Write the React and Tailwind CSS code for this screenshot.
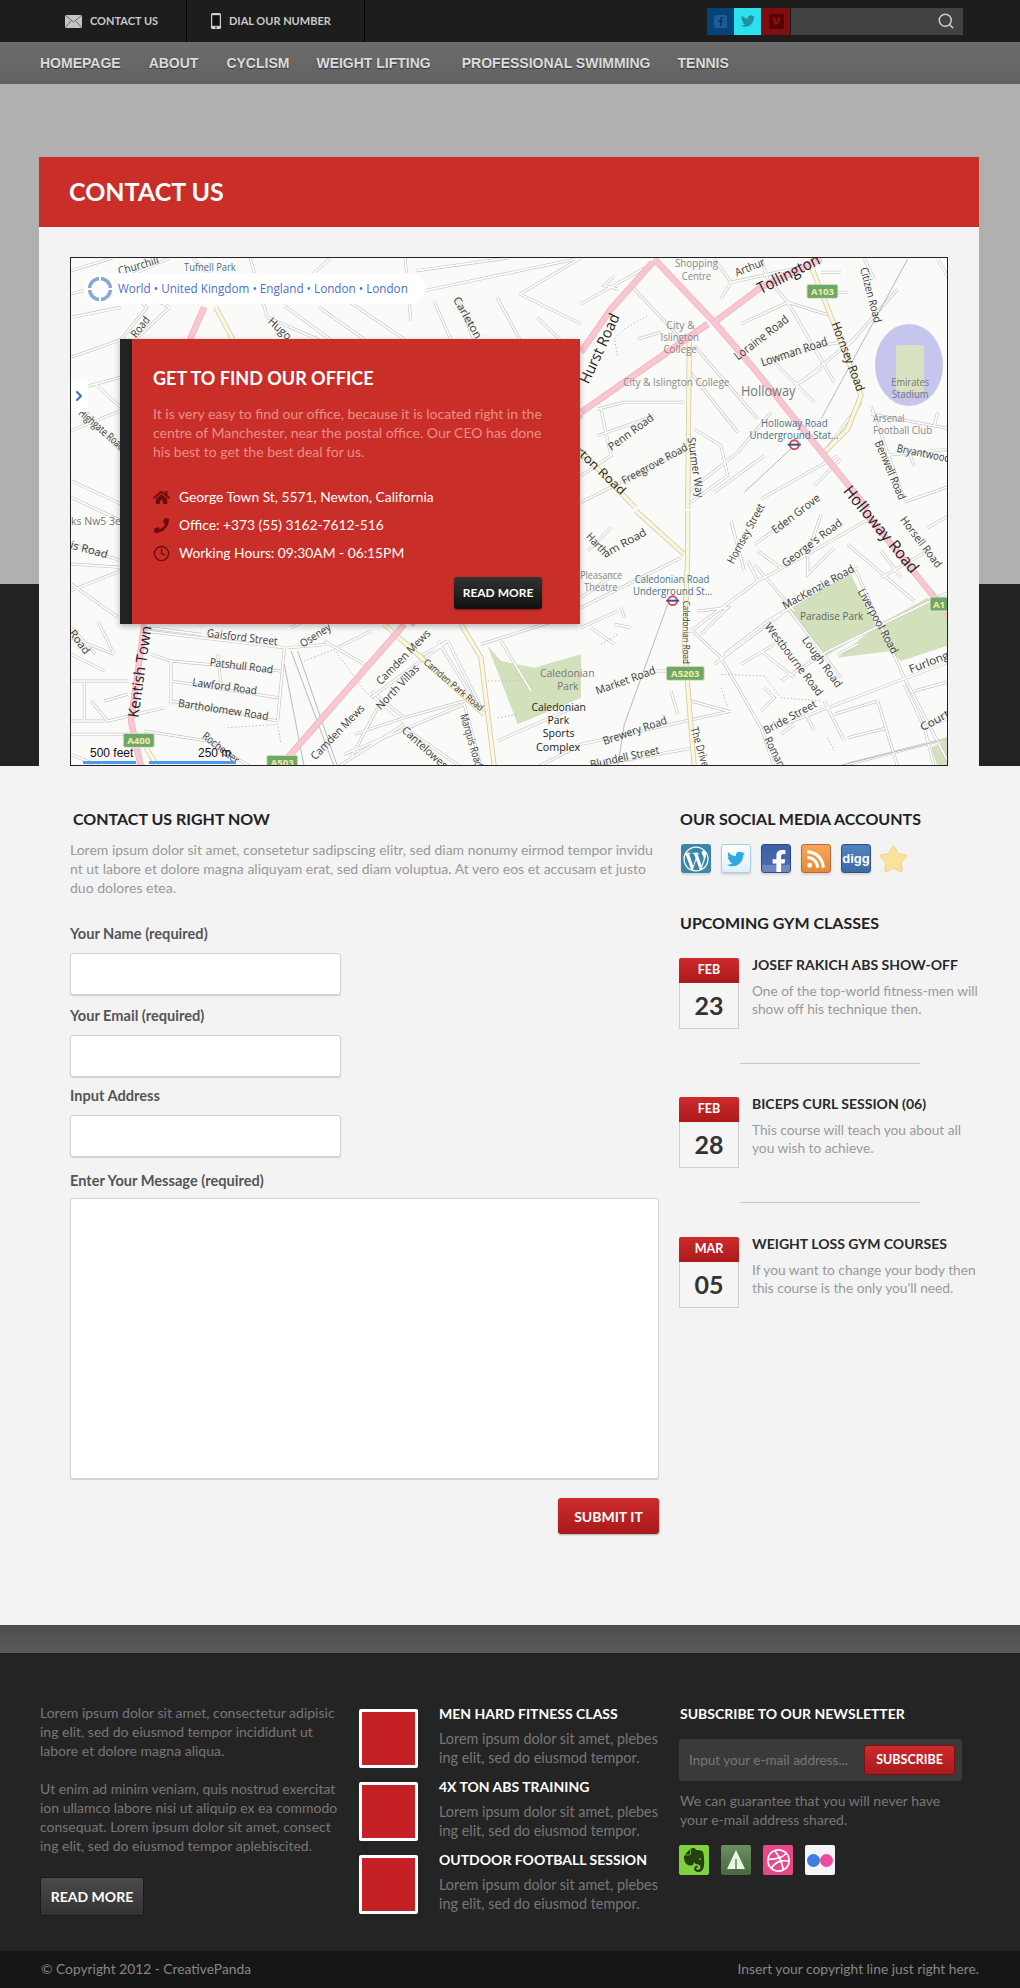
import { FaWordpressSimple, FaTwitter, FaFacebookF, FaRss, FaVimeoV, FaStar, FaHome, FaPhoneAlt } from 'react-icons/fa';
import { SiEvernote, SiDribbble } from 'react-icons/si';
import { FiClock, FiSearch, FiChevronRight } from 'react-icons/fi';

// the map data was read off four different blow-ups of the map, each has its own scale
const fromWhole = (x, y) => [(x - 18) / 1.742, (y - 22) / 3];
const fromTopRight = (x, y) => [510 + x / 3, 1 + y / 3];
const fromBottomRight = (x, y) => [510 + x / 3, 253 + y / 3];
const fromBottomLeft = (x, y) => [x / 3, 363 + y / 3];

const pts = (s, conv = fromWhole) =>
  s.split(' ').map((p) => {
    const [x, y] = p.split(',').map(Number);
    const [mx, my] = conv(x, y);
    return `${mx.toFixed(1)},${my.toFixed(1)}`;
  }).join(' ');

const list = (conv, items) => items.map((s) => pts(s, conv));

const minorStreets = [
  ...list(fromWhole, [
    '18,130 100,90 190,22', '18,60 90,22', '35,480 105,600', '18,690 105,760', '18,740 105,810', '18,880 105,930',
    '18,940 105,950', '18,1020 105,960', '18,1130 60,1210', '18,1000 100,1100', '18,540 105,480', '18,200 105,170', '18,320 105,267',
    '18,420 105,380', '60,400 105,470', '100,90 150,170 105,267', '190,170 130,267', '190,170 100,90', '360,200 450,267', '390,165 470,267',
    '450,170 530,267', '500,150 600,267', '600,22 610,210', '690,140 720,267', '760,140 800,267', '800,130 906,220',
    '620,60 780,22', '906,160 1030,40', '800,130 906,22', '550,150 906,22', '300,140 620,100', '330,22 360,200', '230,22 300,140',
    '650,150 680,267', '830,200 870,267', '420,100 470,22',
  ]),
  ...list(fromTopRight, [
    '160,90 300,240', '340,260 530,480', '320,330 470,520', '470,580 570,460', '400,700 550,590', '330,730 440,650 420,560 340,510',
    '50,450 130,430 310,430', '60,450 90,590 0,650', '50,530 220,470', '0,730 320,570', '480,195 620,130 750,170', '620,130 560,60 540,0',
    '400,0 450,70 420,120', '450,70 680,20', '620,130 760,370', '540,310 720,260 780,250', '580,310 700,430', '660,370 830,230', '720,330 640,380',
    '730,580 840,430', '870,440 970,720', '870,465 1110,510', '1070,460 1060,500', '900,590 1110,570', '980,570 1000,620', '970,730 1110,680',
    '700,680 780,600', '470,580 320,700', '540,720 770,590', '850,0 880,60', '1070,0 1110,70', '800,260 950,90', '100,50 70,80 110,90',
    '170,240 240,220', '730,100 800,100', '720,40 780,40',
  ]),
  ...list(fromBottomRight, [
    '20,120 90,50', '0,260 100,190', '0,290 300,140', '350,300 440,290 360,370', '330,360 530,210 680,130 870,20', '530,210 500,150',
    '430,430 560,330 830,170', '680,130 680,190 760,110', '620,290 780,500', '520,160 640,300', '335,360 420,440 540,650 580,768',
    '400,460 600,310', '480,460 580,400', '540,420 640,500', '600,510 740,420', '740,420 1110,240', '770,430 830,400', '800,100 1000,270',
    '820,170 970,500 1110,768', '900,120 960,200', '1040,50 1110,10', '225,480 260,480', '0,700 450,600', '20,768 340,710', '270,540 290,610',
    '330,570 440,600', '540,600 580,560 550,530', '600,670 640,640', '670,600 700,660', '610,640 1110,450', '730,570 790,690', '760,610 890,570',
    '800,680 920,650', '890,570 950,768', '1000,540 1110,510', '1020,650 1110,620', '800,760 1110,680', '970,520 1030,650 1060,768', '0,350 110,300',
    '30,350 100,400', '100,340 150,350', '120,290 130,320', '520,100 620,30', '450,30 490,180', '530,120 600,170', '680,130 720,10', '900,200 1040,120',
  ]),
  ...list(fromBottomLeft, [
    '220,30 640,80', '640,80 620,300', '300,120 630,150', '300,180 620,230', '300,120 300,250', '300,240 620,300', '240,100 300,120',
    '40,180 40,300', '0,180 170,180', '100,240 170,220', '60,240 110,300 280,260', '0,340 180,340', '0,300 100,300', '220,330 410,360 540,438',
    '650,80 770,70', '800,80 900,30', '760,60 880,130', '900,210 1000,290', '850,340 1000,290', '900,230 1130,60', '1000,290 1180,240',
    '820,400 1180,250', '800,438 1000,310', '1130,60 1230,260', '1040,110 1130,60', '1180,250 1230,438', '1230,70 1450,0', '1290,60 1380,210',
    '1280,360 1530,250', '1400,438 1530,370', '1000,320 1170,438', '1100,60 1230,270', '0,50 130,100', '0,100 100,150', '80,0 130,100', '840,410 920,260',
    '230,20 390,40', '660,20 700,0', '0,400 90,438', '440,100 450,190',
  ]),
];
const thinLines = [
  ...list(fromTopRight, ['720,480 980,0', '490,700 640,560']),
  ...list(fromBottomRight, ['260,280 130,640 110,768', '760,768 1110,680']),
  ...list(fromBottomLeft, ['680,90 800,438', '660,90 790,438', '640,130 700,438']),
];
const footpaths = [
  ...list(fromTopRight, ['110,290 100,240 130,210 200,170']),
  ...list(fromBottomRight, ['420,490 550,495 600,560 720,570', '420,530 440,590', '740,680 760,720', '60,400 110,370']),
  ...list(fromBottomLeft, ['700,120 790,85 880,210 1000,310', '470,320 620,310 630,370', '1280,290 1340,280', '1240,180 1350,180']),
];
const pinkRoads = [
  ...list(fromTopRight, ['220,0 400,190 520,330 860,750', '400,190 540,85 720,0', '380,195 0,460', '215,10 90,150 0,280']),
  ...list(fromBottomRight, ['850,0 1110,320']),
  ...list(fromBottomLeft, ['1000,10 860,170 650,410', '220,10 180,300 210,438']),
  pts('906,490 610,1122'),
  pts('250,170 225,267'),
];
const creamRoads = [
  ...list(fromTopRight, ['690,20 800,300 840,410 800,510 730,580', '325,250 320,750']),
  ...list(fromBottomRight, ['165,0 310,130', '320,0 320,130 310,400 340,768']),
  ...list(fromBottomLeft, ['940,10 1240,280', '1170,10 1230,110 1270,438', '225,380 260,438']),
  pts('906,600 1000,770'),
  pts('270,170 300,267'),
];
const mapLabels = [
  ['Tufnell Park', 215, 47, 305, 47, 11, '#4a7088'], ['Churchill', 100, 60, 170, 25, 11], ['Shopping', 1070, 36, 1145, 36, 11, '#888'],
  ['Centre', 1082, 75, 1133, 75, 11, '#888'], ['Arthur', 1175, 65, 1225, 30, 11], ['Tollington', 1215, 115, 1320, 22, 16, '#222'],
  ['Road', 125, 255, 150, 200, 11], ['Hugo', 365, 205, 400, 260, 11], ['Citizen Road', 1400, 50, 1425, 215, 11], ['Carleton', 690, 140, 730, 260, 11],
  ['Hornsey Road', 1350, 215, 1395, 420, 12, '#222'], ['Loraine Road', 1175, 320, 1265, 200, 12], ['Lowman Road', 1220, 335, 1335, 270, 12],
  ['Hurst Road', 910, 395, 965, 190, 15, '#222'],
  ['City &', 1055, 222, 1105, 222, 11, '#888'], ['Islington', 1045, 258, 1112, 258, 11, '#888'], ['College', 1050, 294, 1108, 294, 11, '#888'],
  ['City & Islington College', 980, 393, 1165, 393, 11, '#888'], ['Holloway', 1185, 420, 1280, 420, 14, '#777'], ['Emirates', 1447, 393, 1513, 393, 11, '#777'],
  ['Stadium', 1448, 428, 1512, 428, 11, '#777'], ['Arsenal', 1415, 500, 1470, 500, 11, '#888'], ['Football Club', 1415, 536, 1518, 536, 11, '#888'],
  ['Holloway Road', 1220, 515, 1336, 515, 11, '#4a7088'], ['Underground Stat...', 1200, 551, 1355, 551, 11, '#4a7088'], ['Bryantwood', 1457, 590, 1550, 622, 11],
  ['Benwell Road', 1425, 570, 1468, 745, 11], ['Penn Road', 955, 590, 1030, 495, 11], ['Freegrove Road', 978, 690, 1090, 585, 11],
  ['Sturmer Way', 1100, 560, 1115, 740, 11], ['Hornsey Street', 1165, 935, 1220, 760, 11], ['Eden Grove', 1240, 840, 1320, 735, 11],
  ["George's Road", 1258, 940, 1358, 810, 11], ['Holloway Road', 1370, 710, 1490, 960, 16, '#222'], ['Horsell Road', 1468, 800, 1532, 945, 11],
  ['Harth', 920, 850, 950, 905, 11], ['am Road', 945, 910, 1018, 840, 11], ['Barton Road', 880, 560, 982, 725, 12, '#222'],
  ['Pleasance', 905, 972, 978, 972, 11, '#888'], ['Theatre', 912, 1008, 970, 1008, 11, '#888'],
  ['Caledonian Road', 1000, 983, 1130, 983, 11, '#4a7088'], ['Underground St...', 997, 1019, 1135, 1019, 11, '#4a7088'], ['MacKenzie Road', 1258, 1065, 1380, 950, 11],
  ['Paradise Park', 1288, 1093, 1398, 1093, 11, '#666'], ['Liverpool Road', 1395, 1015, 1455, 1205, 11], ['Westbourne Road', 1232, 1120, 1325, 1330, 11],
  ['Lough Road', 1297, 1160, 1358, 1305, 11], ['Furlong', 1478, 1255, 1546, 1210, 11], ['Caledonian Road', 1090, 1050, 1090, 1240, 9.5],
  ['Market Road', 932, 1320, 1035, 1255, 11], ['Caledonian', 835, 1265, 930, 1265, 11, '#777'], ['Park', 865, 1303, 902, 1303, 11, '#777'],
  ['Caledonian', 820, 1366, 915, 1366, 11, '#222'], ['Park', 848, 1405, 886, 1405, 11, '#222'], ['Sports', 840, 1445, 895, 1445, 11, '#222'],
  ['Complex', 828, 1486, 905, 1486, 11, '#222'], ['Brewery Road', 945, 1470, 1055, 1405, 11], ['Blundell Street', 922, 1540, 1042, 1495, 11],
  ['The Drive', 1105, 1430, 1125, 1547, 11], ['Bride Street', 1225, 1440, 1315, 1355, 11], ['Roman', 1232, 1460, 1258, 1547, 11],
  ['Court', 1498, 1430, 1546, 1385, 11], ['Gaisford Street', 255, 1145, 378, 1170, 11], ['Oseney', 418, 1180, 468, 1125, 11],
  ['Patshull Road', 260, 1232, 370, 1255, 11], ['Lawford Road', 230, 1292, 342, 1318, 11], ['Bartholomew Road', 205, 1355, 362, 1395, 11],
  ['Kentish Town', 125, 1400, 148, 1125, 15, '#222'], ['Rochester', 250, 1450, 310, 1530, 11], ['Camden Mews', 552, 1295, 640, 1140, 11],
  ['North Villas', 552, 1370, 620, 1245, 11], ['Camden Park Road', 635, 1230, 735, 1375, 9.5], ['Camden Mews', 438, 1520, 525, 1365, 11],
  ['Marquis Road', 703, 1390, 730, 1547, 11], ['Cantelowes', 598, 1432, 672, 1547, 11], ['Highgate Road', 35, 480, 110, 590, 11],
  ['ks Nw5 3e', 18, 808, 105, 808, 11, '#777'], ['is Road', 18, 880, 82, 910, 11], ['Road', 20, 1140, 48, 1205, 11],
];
const shields = [['A103', 1327, 122, 31], ['A1', 1530, 1060, 18], ['A5203', 1088, 1268, 38], ['A400', 136, 1469, 31], ['A503', 386, 1535, 31]];

function MapArt() {
  return (
    <svg viewBox="0 0 876 507" className="block w-full h-full" fontFamily="'Open Sans', sans-serif">
      <rect width="876" height="507" fill="#fafaf8" />
      <polygon points={pts('615,295 810,190 885,345 735,435', fromBottomRight)} fill="#d2e0bc" />
      <polygon points={pts('885,345 1040,260 1110,330 1110,400 960,450 930,420 770,440', fromBottomRight)} fill="#d2e0bc" />
      <polygon points={pts('1250,75 1290,120 1390,140 1530,100 1530,230 1340,310', fromBottomLeft)} fill="#d2e0bc" />
      <polygon points={pts('1050,710 1110,680 1110,768 1070,768', fromBottomRight)} fill="#d2e0bc" />
      <ellipse cx="838" cy="107" rx="34" ry="41" fill="#c5c5ee" />
      <rect x="825" y="87" width="28" height="47" rx="2" fill="#d6e2c2" />
      {minorStreets.map((s, i) => <polyline key={i} points={s} fill="none" stroke="#c6c6c4" strokeWidth="3" />)}
      {minorStreets.map((s, i) => <polyline key={`w${i}`} points={s} fill="none" stroke="#fff" strokeWidth="1.7" />)}
      {thinLines.map((s, i) => <polyline key={`t${i}`} points={s} fill="none" stroke="#a8a8a8" strokeWidth="0.8" />)}
      {footpaths.map((s, i) => <polyline key={`f${i}`} points={s} fill="none" stroke="#bcbcbc" strokeWidth="1" strokeDasharray="1.5 2" />)}
      {creamRoads.map((s, i) => <polyline key={`c${i}`} points={s} fill="none" stroke="#c9c5a8" strokeWidth="5" />)}
      {creamRoads.map((s, i) => <polyline key={`ci${i}`} points={s} fill="none" stroke="#fcf7d8" strokeWidth="3.6" />)}
      {pinkRoads.map((s, i) => <polyline key={`p${i}`} points={s} fill="none" stroke="#eeb0bd" strokeWidth="6.4" />)}
      {pinkRoads.map((s, i) => <polyline key={`pi${i}`} points={s} fill="none" stroke="#f9c6d1" strokeWidth="5" />)}
      {mapLabels.map(([text, x1, y1, x2, y2, size, color], i) => {
        const [ax, ay] = fromWhole(x1, y1);
        const [bx, by] = fromWhole(x2, y2);
        const mx = (ax + bx) / 2, my = (ay + by) / 2;
        const deg = (Math.atan2(by - ay, bx - ax) * 180) / Math.PI;
        return (
          <text key={i} x={mx} y={my} fontSize={size} fill={color || '#3a3a3a'} textAnchor="middle" dominantBaseline="central"
            textLength={Math.hypot(bx - ax, by - ay).toFixed(1)} lengthAdjust="spacingAndGlyphs"
            transform={`rotate(${deg.toFixed(1)} ${mx.toFixed(1)} ${my.toFixed(1)})`}>
            {text}
          </text>
        );
      })}
      {shields.map(([t, x, y, w]) => {
        const [sx, sy] = fromWhole(x, y);
        return (
          <g key={t}>
            <rect x={sx - w / 2} y={sy - 7} width={w} height="14" rx="2" fill="#6fa76a" stroke="#d9e6c8" />
            <text x={sx} y={sy} fontSize="9.5" fontWeight="700" fill="#f7eea3" textAnchor="middle" dominantBaseline="central">{t}</text>
          </g>
        );
      })}
      {[[1278, 582], [1066, 1050]].map(([x, y]) => {
        const [tx, ty] = fromWhole(x, y);
        return (
          <g key={x}>
            <circle cx={tx} cy={ty} r="4.4" fill="#fff" stroke="#e0404a" strokeWidth="1.8" />
            <rect x={tx - 6.5} y={ty - 1} width="13" height="2" fill="#35558f" />
          </g>
        );
      })}
      <rect x="12" y="503" width="53" height="3" fill="#4a9af5" />
      <rect x="78" y="503" width="87" height="3" fill="#4a9af5" />
      <text x="19" y="499" fontSize="12" fill="#111" fontFamily="'Liberation Sans', sans-serif">500 feet</text>
      <text x="127" y="499" fontSize="12" fill="#111" fontFamily="'Liberation Sans', sans-serif">250 m</text>
    </svg>
  );
}

const headFont = "font-['Lato'] font-bold";
const labelClass = `block text-[14.6px] leading-[18px] text-[#555] ${headFont}`;
const inputClass = "block mt-[10px] w-[271px] h-[42px] bg-white border border-[#d4d4d4] rounded-[3px] shadow-[0_1px_1px_rgba(0,0,0,0.15)]";

function SocialTile({ bg, children }) {
  return <span className={`relative overflow-hidden flex items-center justify-center w-[30px] h-[29px] rounded-[3px] shadow-[0_2px_2px_rgba(0,0,0,0.12)] ${bg}`}>{children}</span>;
}

function EventItem({ month, day, title, lines }) {
  return (
    <div className="flex gap-[13px]">
      <div className="w-[60px] shrink-0">
        <div className={`h-[25px] flex items-center justify-center rounded-t-[2px] bg-gradient-to-b from-[#cf2a2c] to-[#ab1a1c] text-white text-[12.5px] ${headFont}`}>{month}</div>
        <div className={`h-[46px] flex items-center justify-center bg-[#f5f5f5] border border-t-0 border-[#cfcfcf] text-[#333] text-[25px] ${headFont}`}>{day}</div>
      </div>
      <div>
        <div className={`text-[14px] leading-[14px] text-[#2a2a2a] ${headFont}`}>{title}</div>
        <p className="mt-[10px] text-[13.7px] leading-[18px] text-[#9a9a9a] whitespace-nowrap">{lines[0]}<br />{lines[1]}</p>
      </div>
    </div>
  );
}

function FooterClass({ title }) {
  return (
    <div className="flex gap-[21px]">
      <div className="w-[59px] h-[59px] shrink-0 bg-[#c42026] border-[3px] border-white rounded-[2px]" />
      <div className="-mt-[4px]">
        <div className={`text-[14px] leading-[18px] text-white ${headFont}`}>{title}</div>
        <p className="mt-[6px] text-[14.4px] leading-[19px] text-[#777] whitespace-nowrap">Lorem ipsum dolor sit amet, plebes<br />ing elit, sed do eiusmod tempor.</p>
      </div>
    </div>
  );
}

export default function App() {
  return (
    <div className="w-[1020px] bg-[#f3f3f3] font-['Lato']">
      {/* top bar */}
      <div className="h-[42px] bg-[#1d1d1d] flex items-center justify-between pr-[57px]">
        <div className={`flex h-full text-[11px] text-[#c9c9c9] ${headFont}`}>
          <div className="w-[187px] pl-[65px] flex items-center gap-[8px] border-r border-black">
            <svg viewBox="0 0 17 13" className="w-[17px] h-[13px]">
              <rect width="17" height="13" fill="#c4c4c4" />
              <path d="M0 0 L8.5 7 L17 0 M0 13 L6.5 5.5 M17 13 L10.5 5.5" fill="none" stroke="#6a6a6a" strokeWidth="1" />
            </svg>
            <span>CONTACT US</span>
          </div>
          <div className="w-[178px] pl-[24px] flex items-center gap-[8px] border-r border-black">
            <svg viewBox="0 0 10 16" className="w-[10px] h-[16px]">
              <rect width="10" height="16" rx="1.5" fill="#d0d0d0" />
              <rect x="1.2" y="2.2" width="7.6" height="10.6" fill="#111" />
              <circle cx="5" cy="14.4" r="0.9" fill="#333" />
            </svg>
            <span>DIAL OUR NUMBER</span>
          </div>
        </div>
        <div className="flex h-[27px]">
          <span className="w-[27px] bg-[#03457a] flex items-center justify-center"><span className="w-[13px] h-[13px] bg-[#1f5c96] rounded-[2px] flex items-center justify-center"><FaFacebookF className="w-[8px] h-[9px] text-[#063a68]" /></span></span>
          <span className="w-[27px] bg-[#2de0f0] flex items-center justify-center"><FaTwitter className="w-[16px] h-[14px] text-[#21919d]" /></span>
          <span className="w-[28px] ml-[1px] bg-[#7f0f0f] flex items-center justify-center"><span className="w-[15px] h-[15px] bg-[#560202] rounded-[2px] flex items-center justify-center"><FaVimeoV className="w-[10px] h-[10px] text-[#8f1212]" /></span></span>
          <span className="w-[172px] ml-[1px] bg-[#424242] flex items-center justify-end pr-[8px]"><FiSearch className="w-[18px] h-[18px] text-[#ccc]" /></span>
        </div>
      </div>

      {/* nav */}
      <nav className="h-[42px] bg-gradient-to-b from-[#6c6c6c] to-[#626262] flex items-center pl-[40px] font-['Liberation_Sans'] font-bold text-[14px] text-[#dcdcdc] [text-shadow:0_1px_1px_rgba(0,0,0,0.5)]">
        <span>HOMEPAGE</span>
        <span className="ml-[28px]">ABOUT</span>
        <span className="ml-[28px]">CYCLISM</span>
        <span className="ml-[27px]">WEIGHT LIFTING</span>
        <span className="ml-[31px]">PROFESSIONAL SWIMMING</span>
        <span className="ml-[27px]">TENNIS</span>
      </nav>

      {/* hero + map card */}
      <div className="pt-[73px] px-[39px] bg-[linear-gradient(#b0b0b0_0,#b0b0b0_500px,#222222_500px)]">
        <div className="w-[940px] bg-[#f3f3f3]">
          <div className="h-[70px] bg-[#c92e29] flex items-center pl-[30px]">
            <h1 className={`text-[25px] text-white ${headFont}`}>CONTACT US</h1>
          </div>
          <div className="pt-[30px] pl-[31px] pr-[31px]">
            <div className="relative h-[509px] border border-[#222] overflow-hidden">
              <MapArt />
              <div className="absolute left-[13px] top-[15px] w-[341px] h-[31px] bg-white/95 rounded-[14px] flex items-center pl-[3px] gap-[5px] font-['Open_Sans'] text-[11.7px] text-[#4a72c8]">
                <svg viewBox="0 0 26 26" className="w-[26px] h-[26px] shrink-0">
                  <circle cx="13" cy="13" r="10.5" fill="none" stroke="#86a9d8" strokeWidth="3.5" />
                  <path d="M13 0 V6 M13 20 V26 M0 13 H6 M20 13 H26" stroke="#fff" strokeWidth="2" />
                </svg>
                <span className="whitespace-nowrap">World • United Kingdom • England • London • London</span>
              </div>
              <div className="absolute left-0 top-[122px] w-[17px] h-[32px] bg-white rounded-r-[3px] flex items-center text-[#3a6fc0]">
                <FiChevronRight className="w-[16px] h-[18px]" strokeWidth={3} />
              </div>
              <div className="absolute left-[49px] top-[81px] w-[460px] h-[285px] bg-[#c92e29] border-l-[12px] border-[#222] shadow-[0_2px_6px_rgba(0,0,0,0.3)] pl-[21px] pr-[38px]">
                <h2 className={`mt-[28px] text-[18px] leading-[22px] text-white ${headFont}`}>GET TO FIND OUR OFFICE</h2>
                <p className="mt-[15px] text-[14px] leading-[19px] text-[#ec8f88] whitespace-nowrap">It is very easy to find our office, because it is located right in the<br />centre of Manchester, near the postal office. Our CEO has done<br />his best to get the best deal for us.</p>
                <ul className="mt-[22px] text-[13.8px] text-white">
                  <li className="h-[28px] flex items-center gap-[9px]"><FaHome className="w-[17px] h-[17px] text-[#6d0d0b]" />George Town St, 5571, Newton, California</li>
                  <li className="h-[28px] flex items-center gap-[9px]"><FaPhoneAlt className="w-[17px] h-[15px] text-[#6d0d0b] -scale-x-100" />Office: +373 (55) 3162-7612-516</li>
                  <li className="h-[28px] flex items-center gap-[9px]"><FiClock className="w-[17px] h-[17px] text-[#6d0d0b]" />Working Hours: 09:30AM - 06:15PM</li>
                </ul>
                <div className="mt-[10px] flex justify-end">
                  <button className={`w-[88px] h-[32px] rounded-[3px] bg-gradient-to-b from-[#333] to-[#111] text-white text-[12px] shadow-[0_1px_2px_rgba(0,0,0,0.4)] ${headFont}`}>READ MORE</button>
                </div>
              </div>
            </div>
          </div>
        </div>
      </div>

      {/* contact form and sidebar */}
      <div className="pl-[70px] pt-[43px] pb-[91px] flex">
        <div className="w-[589px]">
          <h3 className={`pl-[3px] text-[16px] leading-[20px] text-[#222] ${headFont}`}>CONTACT US RIGHT NOW</h3>
          <p className="mt-[11px] text-[14px] leading-[19px] text-[#999] whitespace-nowrap">Lorem ipsum dolor sit amet, consetetur sadipscing elitr, sed diam nonumy eirmod tempor invidu<br />nt ut labore et dolore magna aliquyam erat, sed diam voluptua. At vero eos et accusam et justo<br />duo dolores etea.</p>
          <label className={`${labelClass} mt-[28px]`}>Your Name (required)</label>
          <input className={inputClass} />
          <label className={`${labelClass} mt-[12px]`}>Your Email (required)</label>
          <input className={inputClass} />
          <label className={`${labelClass} mt-[10px]`}>Input Address</label>
          <input className={inputClass} />
          <label className={`${labelClass} mt-[15px]`}>Enter Your Message (required)</label>
          <textarea className="block mt-[8px] w-[589px] h-[281px] bg-white border border-[#d4d4d4] rounded-[3px] shadow-[0_1px_1px_rgba(0,0,0,0.15)] resize-none" />
          <div className="mt-[19px] flex justify-end">
            <button className={`w-[101px] h-[36px] rounded-[3px] bg-gradient-to-b from-[#cf2a2c] to-[#a81a1c] text-white text-[14px] shadow-[0_1px_2px_rgba(0,0,0,0.3)] ${headFont}`}>SUBMIT IT</button>
          </div>
        </div>
        <div className="ml-[20px] w-[300px]">
          <h3 className={`pl-[1px] text-[16px] leading-[20px] text-[#222] ${headFont}`}>OUR SOCIAL MEDIA ACCOUNTS</h3>
          <div className="mt-[15px] pl-[2px] flex items-center gap-[10px]">
            <SocialTile bg="bg-[#3c86ab]"><FaWordpressSimple className="w-[26px] h-[26px] text-white" /></SocialTile>
            <SocialTile bg="bg-gradient-to-b from-white to-[#dff0fa] border border-[#a9cfe4]"><FaTwitter className="w-[20px] h-[18px] text-[#2fa9df]" /></SocialTile>
            <SocialTile bg="bg-gradient-to-b from-[#3d5fa8] to-[#4f6cae] border border-[#2f4a80]">
              <span className="absolute inset-x-0 bottom-0 h-[7px] bg-[#6e86bd]" />
              <FaFacebookF className="relative w-[18px] h-[24px] text-white translate-x-[3px] translate-y-[3px]" />
            </SocialTile>
            <SocialTile bg="bg-gradient-to-b from-[#f4a75b] to-[#e98734] border border-[#b26a40]"><FaRss className="w-[20px] h-[20px] text-white" /></SocialTile>
            <SocialTile bg="bg-gradient-to-b from-[#5283bd] to-[#3c6aa4] border border-[#2f5384]"><span className="font-['Liberation_Sans'] font-bold text-[13px] text-white">digg</span></SocialTile>
            <FaStar className="-ml-[2px] w-[29px] h-[28px] text-[#fbe29a] stroke-[#e6c678] stroke-[12]" />
          </div>
          <h3 className={`mt-[40px] pl-[1px] text-[16px] leading-[20px] text-[#222] ${headFont}`}>UPCOMING GYM CLASSES</h3>
          <div className="mt-[25px]">
            <EventItem month="FEB" day="23" title="JOSEF RAKICH ABS SHOW-OFF" lines={['One of the top-world fitness-men will', 'show off his technique then.']} />
            <div className="mt-[34px] ml-[61px] w-[180px] h-px bg-[#c8c8c8]" />
            <div className="mt-[33px]"><EventItem month="FEB" day="28" title="BICEPS CURL SESSION (06)" lines={['This course will teach you about all', 'you wish to achieve.']} /></div>
            <div className="mt-[34px] ml-[61px] w-[180px] h-px bg-[#c8c8c8]" />
            <div className="mt-[34px]"><EventItem month="MAR" day="05" title="WEIGHT LOSS GYM COURSES" lines={['If you want to change your body then', "this course is the only you'll need."]} /></div>
          </div>
        </div>
      </div>

      {/* footer */}
      <div className="h-[28px] bg-gradient-to-b from-[#4d4d4d] to-[#5a5a5a]" />
      <div className="h-[298px] bg-[#242424] pl-[40px] flex">
        <div className="w-[300px] pt-[50px] text-[14px] leading-[19px] text-[#777] whitespace-nowrap">
          <p>Lorem ipsum dolor sit amet, consectetur adipisic<br />ing elit, sed do eiusmod tempor incididunt ut<br />labore et dolore magna aliqua.</p>
          <p className="mt-[19px]">Ut enim ad minim veniam, quis nostrud exercitat<br />ion ullamco labore nisi ut aliquip ex ea commodo<br />consequat. Lorem ipsum dolor sit amet, consect<br />ing elit, sed do eiusmod tempor aplebiscited.</p>
          <button className={`block mt-[22px] w-[104px] h-[39px] rounded-[3px] border border-[#1a1a1a] bg-gradient-to-b from-[#4a4a4a] to-[#333] text-white text-[14px] ${headFont}`}>READ MORE</button>
        </div>
        <div className="ml-[19px] w-[301px] pt-[56px] flex flex-col gap-[14px]">
          <FooterClass title="MEN HARD FITNESS CLASS" />
          <FooterClass title="4X TON ABS TRAINING" />
          <FooterClass title="OUTDOOR FOOTBALL SESSION" />
        </div>
        <div className="ml-[20px] w-[300px] pt-[52px]">
          <div className={`text-[14px] leading-[18px] text-white ${headFont}`}>SUBSCRIBE TO OUR NEWSLETTER</div>
          <div className="mt-[16px] -ml-[1px] w-[283px] h-[42px] bg-[#3a3a3a] rounded-[3px] flex items-center justify-between pl-[10px] pr-[7px]">
            <span className="text-[13.5px] text-[#777]">Input your e-mail address...</span>
            <button className={`w-[91px] h-[30px] rounded-[3px] border border-[#7d1012] bg-gradient-to-b from-[#cf2a2c] to-[#a81a1c] text-white text-[12.5px] ${headFont}`}>SUBSCRIBE</button>
          </div>
          <p className="mt-[10px] text-[14px] leading-[19px] text-[#777] whitespace-nowrap">We can guarantee that you will never have<br />your e-mail address shared.</p>
          <div className="mt-[16px] -ml-[1px] flex gap-[12px]">
            <span className="w-[30px] h-[30px] rounded-[2px] bg-[#7fd13d] flex items-center justify-center"><SiEvernote className="w-[24px] h-[24px] text-[#24400f]" /></span>
            <span className="w-[30px] h-[30px] rounded-[2px] bg-gradient-to-b from-[#6d8f60] to-[#466a3f] flex items-center justify-center">
              <svg viewBox="0 0 20 22" className="w-[20px] h-[22px]"><polygon points="10,1 19,20 1,20" fill="#e8f5e0" /><rect x="9.4" y="10" width="1.2" height="10" fill="#466a3f" /></svg>
            </span>
            <span className="w-[30px] h-[30px] rounded-[2px] bg-[#e8488a] flex items-center justify-center"><SiDribbble className="w-[23px] h-[23px] text-white" /></span>
            <span className="w-[30px] h-[30px] rounded-[2px] bg-[#f5f5f5] flex items-center justify-center">
              <span className="w-[13px] h-[13px] rounded-full bg-[#3d7fe0]" /><span className="w-[13px] h-[13px] rounded-full bg-[#ee4b9e]" />
            </span>
          </div>
        </div>
      </div>
      <div className="h-[37px] bg-[#161616] px-[41px] flex items-center justify-between text-[13.8px] text-[#868686]">
        <span>© Copyright 2012 - CreativePanda</span>
        <span>Insert your copyright line just right here.</span>
      </div>
    </div>
  );
}
